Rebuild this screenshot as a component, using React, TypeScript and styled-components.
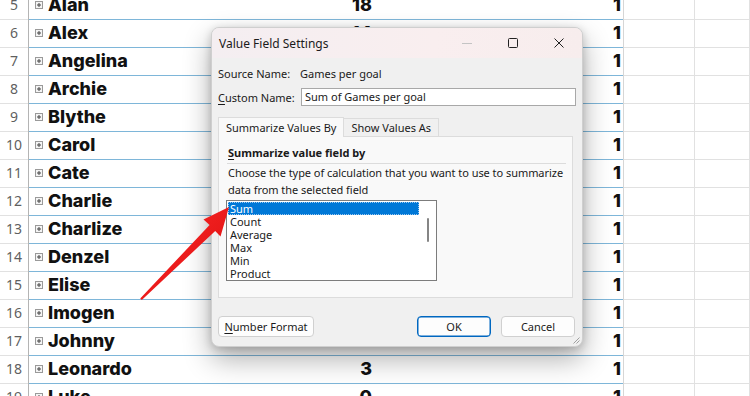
import React from "react";
import styled, { createGlobalStyle, css } from "styled-components";

const Global = createGlobalStyle`
  html, body { margin: 0; padding: 0; background: #fff; overflow: hidden; }
  * { box-sizing: border-box; }
`;

const Page = styled.div`
  position: relative;
  width: 750px;
  height: 396px;
  overflow: hidden;
  background: #fff;
`;

const Sheet = styled.div`
  display: flex;
  flex-direction: column;
  margin-top: -9px;
`;

const Row = styled.div`
  display: grid;
  grid-template-columns: 29px 250px 95px 249px 72px 1fr;
  height: 28px;
`;

const HeaderCell = styled.div`
  border-bottom: 1px solid #e1e1e1;
  border-right: 1px solid #b4b4b4;
  font-family: "Noto Sans", "Liberation Sans", sans-serif;
  font-size: 14px;
  line-height: 28px;
  color: #5f5f5f;
  text-align: center;
`;

const PivotCell = styled.div<{ $align?: "left" | "right" }>`
  border-bottom: 1px solid #7eb6d9;
  font-family: Inter, "Liberation Sans", sans-serif;
  font-weight: 800;
  font-size: 18px;
  line-height: 28px;
  color: #111;
  white-space: nowrap;
  display: flex;
  align-items: flex-start;
  ${(p) =>
    p.$align === "right"
      ? css`
          justify-content: flex-end;
          padding-right: 2px;
        `
      : css`
          padding-left: 6px;
          gap: 5px;
        `}
`;

const PlainCell = styled.div<{ $left?: boolean }>`
  border-bottom: 1px solid #e1e1e1;
  border-right: 1px solid #e1e1e1;
  ${(p) => p.$left && css`border-left: 1px solid #d6d6d6;`}
`;

const Expander = styled.svg`
  flex: none;
  margin-top: 10px;
`;

const PlusBox = () => (
  <Expander width="8" height="8" viewBox="0 0 8 8">
    <rect x="0.5" y="0.5" width="7" height="7" fill="#f4f4f4" stroke="#9a9a9a" />
    <path d="M2 4h4M4 2v4" stroke="#444" strokeWidth="1" />
  </Expander>
);

/* ---------- Dialog ---------- */

const Dialog = styled.div`
  position: absolute;
  left: 211px;
  top: 27px;
  width: 372px;
  height: 320px;
  border-radius: 8px;
  border: 1px solid #cfcfcf;
  background: #f0f0f0;
  box-shadow: 0 12px 28px rgba(0, 0, 0, 0.32), 0 2px 8px rgba(0, 0, 0, 0.18);
  font-family: "Noto Sans", "Open Sans", sans-serif;
  font-size: 11px;
  color: #1a1a1a;
  display: flex;
  flex-direction: column;
  overflow: hidden;
`;

const TitleBar = styled.div`
  height: 30px;
  flex: none;
  display: flex;
  align-items: center;
  padding-left: 7px;
  background: linear-gradient(90deg, #f4eef1 0%, #f9eeef 60%, #f7eded 100%);
`;

const Title = styled.div`
  flex: 1;
  font-size: 12px;
  color: #1b1b1b;
`;

const CaptionButton = styled.div<{ $disabled?: boolean }>`
  width: 46px;
  height: 30px;
  display: flex;
  align-items: center;
  justify-content: center;
  color: ${(p) => (p.$disabled ? "#c4c4c4" : "#222")};
`;

const Body = styled.div`
  flex: 1;
  display: flex;
  flex-direction: column;
  padding: 6px 6px 0 5px;
`;

const FieldRow = styled.div`
  display: flex;
  align-items: center;
  height: 18px;
  margin-bottom: 6px;
`;

const Label = styled.span<{ $w?: number }>`
  width: ${(p) => (p.$w ? `${p.$w}px` : "auto")};
  flex: none;
  padding-left: 1px;
`;

const U = styled.span`
  text-decoration: underline;
  text-underline-offset: 2px;
`;

const TextBox = styled.div`
  flex: 1;
  height: 18px;
  margin-left: 1px;
  border: 1px solid #a8a8a8;
  background: #fff;
  padding-left: 3px;
  line-height: 16px;
`;

const TabStrip = styled.div`
  display: flex;
  align-items: flex-end;
  height: 20px;
  margin-top: 4px;
  padding-left: 1px;
`;

const Tab = styled.div<{ $active?: boolean }>`
  height: ${(p) => (p.$active ? 20 : 18)}px;
  padding: 0 7px;
  line-height: ${(p) => (p.$active ? 19 : 17)}px;
  border: 1px solid #dcdcdc;
  border-bottom: none;
  background: ${(p) => (p.$active ? "#f9f9f9" : "#f0f0f0")};
  position: relative;
  z-index: ${(p) => (p.$active ? 1 : 0)};
  margin-bottom: ${(p) => (p.$active ? "-1px" : "0")};
  ${(p) => !p.$active && css`border-left: none;`}
`;

const Panel = styled.div`
  height: 162px;
  margin: 0 3px 0 1px;
  border: 1px solid #dcdcdc;
  background: #f9f9f9;
  padding: 8px 6px 0 7px;
  display: flex;
  flex-direction: column;
`;

const SectionTitle = styled.div`
  font-weight: 700;
  line-height: 16px;
  margin-left: 1px;
  padding-left: 1px;
  padding-bottom: 2px;
  border-bottom: 1px solid #dcdcdc;
`;

const Description = styled.div`
  line-height: 17px;
  padding-left: 2px;
  white-space: nowrap;
  letter-spacing: -0.05px;
`;

const ListBox = styled.div`
  margin-top: 2px;
  width: 211px;
  height: 81px;
  flex: none;
  border: 1px solid #7c7c7c;
  background: #fff;
  display: flex;
  padding: 1px 0 0 1px;
  overflow: hidden;
`;

const Items = styled.div`
  width: 191px;
  display: flex;
  flex-direction: column;
`;

const Item = styled.div<{ $selected?: boolean }>`
  height: 13px;
  line-height: 13px;
  padding-left: 2px;
  ${(p) =>
    p.$selected &&
    css`
      background: #0078d7;
      color: #fff;
      outline: 1px dotted #9ac7ef;
      outline-offset: -1px;
    `}
`;

const ScrollTrack = styled.div`
  flex: 1;
  display: flex;
  justify-content: center;
  padding-top: 16px;
`;

const Thumb = styled.div`
  width: 2px;
  height: 24px;
  border-radius: 1px;
  background: #858585;
`;

const ButtonRow = styled.div`
  display: flex;
  align-items: center;
  margin-top: 18px;
  padding-left: 1px;
  padding-right: 1px;
  gap: 10px;
`;

const Button = styled.div<{ $primary?: boolean; $w: number }>`
  width: ${(p) => p.$w}px;
  height: 21px;
  line-height: 19px;
  text-align: center;
  border-radius: 4px;
  background: #fdfdfd;
  border: 1px solid ${(p) => (p.$primary ? "#0067c0" : "#d0d0d0")};
  ${(p) => p.$primary && css`box-shadow: inset 0 0 0 0.5px #0067c0;`}
`;

const Spacer = styled.div`
  flex: 1;
`;

const Grip = styled.svg`
  position: absolute;
  right: 2px;
  bottom: 2px;
`;

const ArrowLayer = styled.svg`
  position: absolute;
  left: 0;
  top: 0;
  pointer-events: none;
`;

const rows: { n: number; name: string; b: string }[] = [
  { n: 5, name: "Alan", b: "18" },
  { n: 6, name: "Alex", b: "14" },
  { n: 7, name: "Angelina", b: "" },
  { n: 8, name: "Archie", b: "" },
  { n: 9, name: "Blythe", b: "" },
  { n: 10, name: "Carol", b: "" },
  { n: 11, name: "Cate", b: "" },
  { n: 12, name: "Charlie", b: "" },
  { n: 13, name: "Charlize", b: "" },
  { n: 14, name: "Denzel", b: "" },
  { n: 15, name: "Elise", b: "" },
  { n: 16, name: "Imogen", b: "" },
  { n: 17, name: "Johnny", b: "17" },
  { n: 18, name: "Leonardo", b: "3" },
  { n: 19, name: "Luke", b: "0" },
];

export default function App() {
  return (
    <Page>
      <Global />
      <Sheet>
        {rows.map((r) => (
          <Row key={r.n}>
            <HeaderCell>{r.n}</HeaderCell>
            <PivotCell>
              <PlusBox />
              <span>{r.name}</span>
            </PivotCell>
            <PivotCell $align="right">{r.b}</PivotCell>
            <PivotCell $align="right">1</PivotCell>
            <PlainCell $left />
            <PlainCell />
          </Row>
        ))}
      </Sheet>

      <Dialog>
        <TitleBar>
          <Title>Value Field Settings</Title>
          <CaptionButton $disabled>
            <svg width="10" height="10" viewBox="0 0 10 10">
              <path d="M0 5.5h10" stroke="currentColor" strokeWidth="1" />
            </svg>
          </CaptionButton>
          <CaptionButton>
            <svg width="10" height="10" viewBox="0 0 10 10">
              <rect x="0.5" y="0.5" width="9" height="9" rx="1" fill="none" stroke="currentColor" strokeWidth="1" />
            </svg>
          </CaptionButton>
          <CaptionButton>
            <svg width="10" height="10" viewBox="0 0 10 10">
              <path d="M0.5 0.5l9 9M9.5 0.5l-9 9" stroke="currentColor" strokeWidth="1" />
            </svg>
          </CaptionButton>
        </TitleBar>
        <Body>
          <FieldRow>
            <Label $w={83}>Source Name:</Label>
            <span>Games per goal</span>
          </FieldRow>
          <FieldRow>
            <Label $w={83}>
              <U>C</U>ustom Name:
            </Label>
            <TextBox>Sum of Games per goal</TextBox>
          </FieldRow>
          <TabStrip>
            <Tab $active>Summarize Values By</Tab>
            <Tab>Show Values As</Tab>
          </TabStrip>
          <Panel>
            <SectionTitle>
              <U>S</U>ummarize value field by
            </SectionTitle>
            <Description>
              Choose the type of calculation that you want to use to summarize
              <br />
              data from the selected field
            </Description>
            <ListBox>
              <Items>
                <Item $selected>Sum</Item>
                <Item>Count</Item>
                <Item>Average</Item>
                <Item>Max</Item>
                <Item>Min</Item>
                <Item>Product</Item>
              </Items>
              <ScrollTrack>
                <Thumb />
              </ScrollTrack>
            </ListBox>
          </Panel>
          <ButtonRow>
            <Button $w={96}>
              <U>N</U>umber Format
            </Button>
            <Spacer />
            <Button $w={74} $primary>
              OK
            </Button>
            <Button $w={74}>Cancel</Button>
          </ButtonRow>
        </Body>
        <Grip width="8" height="8" viewBox="0 0 8 8">
          <path d="M7.5 1.5l-6 6M7.5 4.5l-3 3" stroke="#a0a0a0" strokeWidth="1" />
        </Grip>
      </Dialog>

      <ArrowLayer width="750" height="396" viewBox="0 0 750 396">
        <defs>
          <linearGradient id="arrowFill" x1="0" y1="0" x2="1" y2="1">
            <stop offset="0" stopColor="#ff2b2b" />
            <stop offset="1" stopColor="#d90d0d" />
          </linearGradient>
        </defs>
        <polygon
          points="229,207 220.5,236.5 215.2,231 141.8,300 140.2,298.4 209.6,225 203.5,219.5"
          fill="url(#arrowFill)"
        />
      </ArrowLayer>
    </Page>
  );
}
